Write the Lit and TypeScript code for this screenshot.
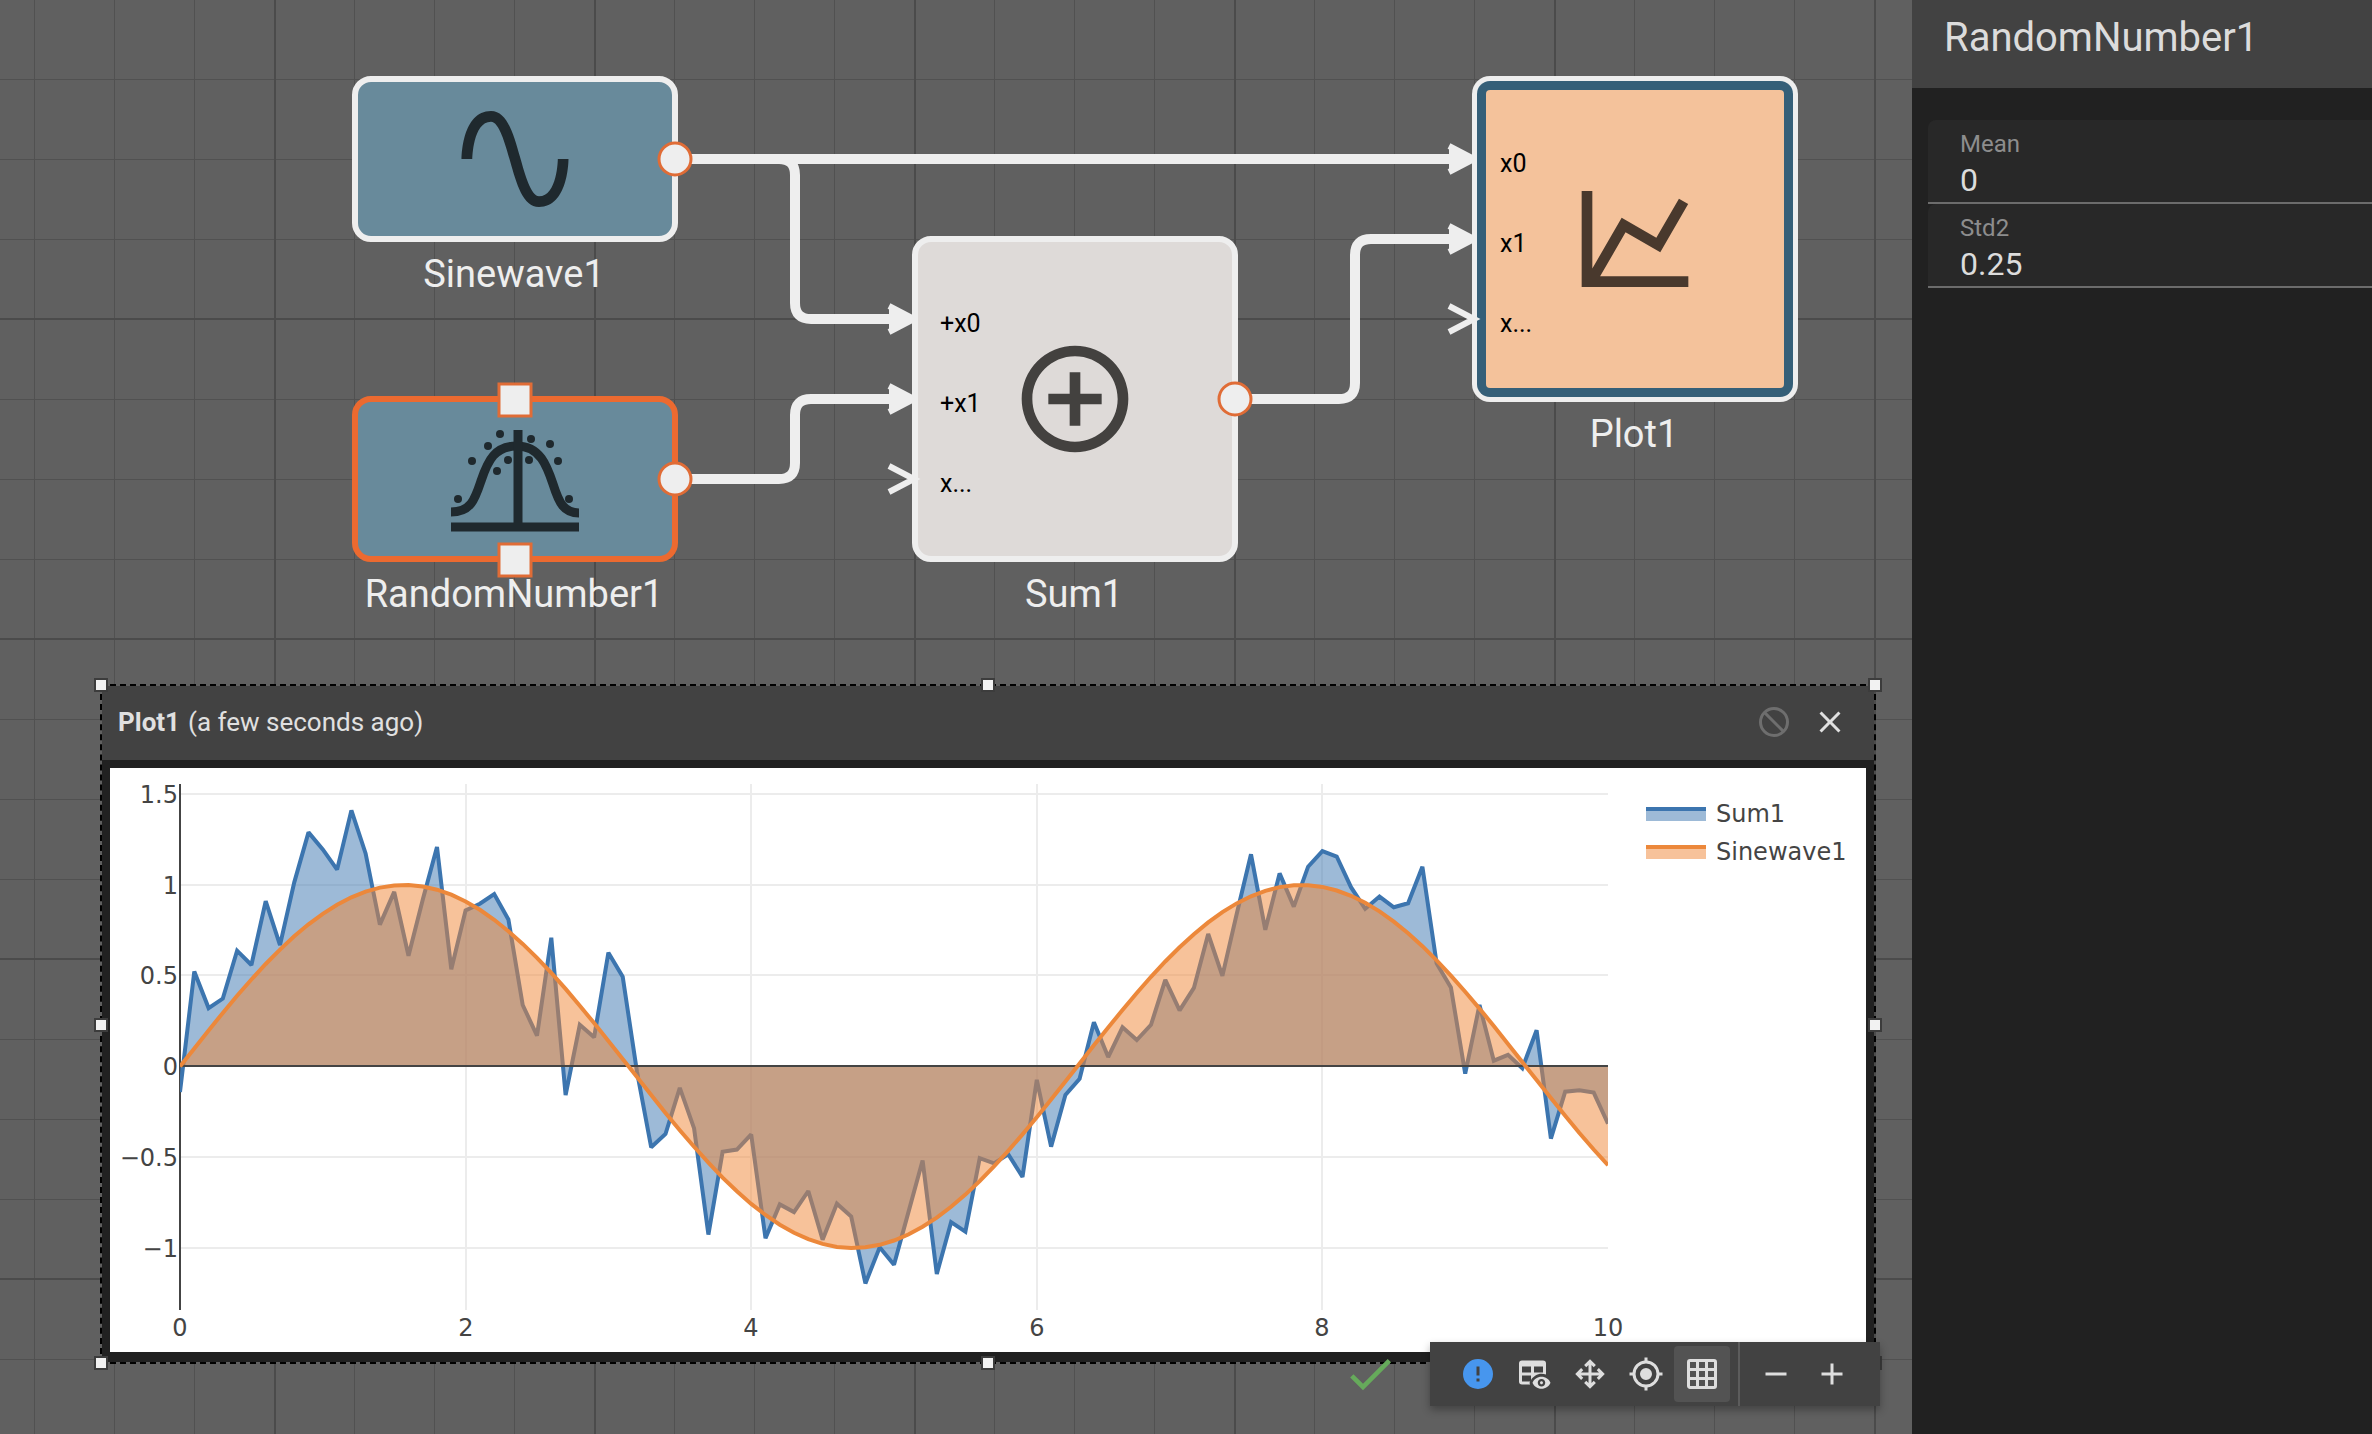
import { LitElement, html, svg, css } from "lit";
import { customElement, property } from "lit/decorators.js";

const SUM_SAMPLES = [
  -0.14, 0.523, 0.322, 0.374, 0.638, 0.559, 0.911, 0.669, 1.013, 1.29,
  1.196, 1.085, 1.411, 1.174, 0.782, 0.962, 0.61, 0.92, 1.209, 0.536,
  0.86, 0.897, 0.95, 0.81, 0.339, 0.17, 0.709, -0.157, 0.23, 0.161,
  0.627, 0.495, -0.03, -0.445, -0.372, -0.118, -0.341, -0.926, -0.47, -0.458,
  -0.374, -0.946, -0.76, -0.802, -0.686, -0.955, -0.756, -0.827, -1.195, -0.996,
  -1.092, -0.805, -0.518, -1.143, -0.858, -0.91, -0.505, -0.534, -0.484, -0.608,
  -0.074, -0.442, -0.157, -0.067, 0.244, 0.052, 0.216, 0.146, 0.23, 0.477,
  0.309, 0.433, 0.73, 0.499, 0.84, 1.169, 0.753, 1.064, 0.881, 1.101,
  1.186, 1.157, 0.988, 0.869, 0.936, 0.877, 0.899, 1.1, 0.568, 0.436,
  -0.039, 0.339, 0.032, 0.064, -0.01, 0.2, -0.397, -0.139, -0.131, -0.144,
  -0.315,
];
const SINE_SAMPLES = SUM_SAMPLES.map((_, i) => Math.sin(i / 10));

const ICONS = {
  sine: "M16.5,21C13.5,21 12.31,16.76 11.05,12.28C10.14,9.04 9,5 7.5,5C4.11,5 4,11.93 4,12H2C2,11.63 2.06,3 7.5,3C10.5,3 11.71,7.25 12.97,11.74C13.83,14.8 15,19 16.5,19C19.94,19 20.03,12.07 20.03,12H22.03C22.03,12.37 21.97,21 16.5,21Z",
  sum: "M12,20C7.59,20 4,16.41 4,12C4,7.59 7.59,4 12,4C16.41,4 20,7.59 20,12C20,16.41 16.41,20 12,20M12,2A10,10 0 0,0 2,12A10,10 0 0,0 12,22A10,10 0 0,0 22,12A10,10 0 0,0 12,2M13,7H11V11H7V13H11V17H13V13H17V11H13V7Z",
  chart: "M16,11.78L20.24,4.45L21.97,5.45L16.74,14.5L10.23,10.75L5.46,19H22V21H2V3H4V17.54L9.5,8L16,11.78Z",
  alert: "M13,13H11V7H13M13,17H11V15H13M12,2A10,10 0 0,0 2,12A10,10 0 0,0 12,22A10,10 0 0,0 22,12A10,10 0 0,0 12,2Z",
  tableEye: "M17 16.88C17.56 16.88 18 17.32 18 17.88S17.56 18.88 17 18.88 16 18.43 16 17.88 16.44 16.88 17 16.88M17 13.88C19.73 13.88 22.06 15.54 23 17.88C22.06 20.22 19.73 21.88 17 21.88S11.94 20.22 11 17.88C11.94 15.54 14.27 13.88 17 13.88M17 15.38C15.62 15.38 14.5 16.5 14.5 17.88S15.62 20.38 17 20.38 19.5 19.26 19.5 17.88 18.38 15.38 17 15.38M18 3H4A2 2 0 0 0 2 5V17A2 2 0 0 0 4 19H9.42C9.26 18.68 9.12 18.34 9 18C9.12 17.66 9.26 17.32 9.42 17H4V13H10V15.92C10.77 14.74 11.8 13.72 13 13C14.2 12.28 15.5 11.88 17 11.88C18.06 11.88 19.07 12.06 20 12.4V5A2 2 0 0 0 18 3M4 11V7H10V11H4M12 11V7H18V11H12Z",
  move: "M13,11H18L16.5,9.5L17.92,8.08L21.84,12L17.92,15.92L16.5,14.5L18,13H13V18L14.5,16.5L15.92,17.92L12,21.84L8.08,17.92L9.5,16.5L11,18V13H6L7.5,14.5L6.08,15.92L2.16,12L6.08,8.08L7.5,9.5L6,11H11V6L9.5,7.5L8.08,6.08L12,2.16L15.92,6.08L14.5,7.5L13,6V11Z",
  center: "M12,8A4,4 0 0,1 16,12A4,4 0 0,1 12,16A4,4 0 0,1 8,12A4,4 0 0,1 12,8M3.05,13H1V11H3.05C3.5,6.83 6.83,3.5 11,3.05V1H13V3.05C17.17,3.5 20.5,6.83 20.95,11H23V13H20.95C20.5,17.17 17.17,20.5 13,20.95V23H11V20.95C6.83,20.5 3.5,17.17 3.05,13M12,5A7,7 0 0,0 5,12A7,7 0 0,0 12,19A7,7 0 0,0 19,12A7,7 0 0,0 12,5Z",
  grid: "M10,4V8H14V4H10M16,4V8H20V4H16M16,10V14H20V10H16M16,16V20H20V16H16M14,20V16H10V20H14M8,20V16H4V20H8M8,14V10H4V14H8M8,8V4H4V8H8M10,14H14V10H10V14M4,2H20A2,2 0 0,1 22,4V20A2,2 0 0,1 20,22H4C2.92,22 2,21.1 2,20V4A2,2 0 0,1 4,2Z",
  minus: "M19,13H5V11H19V13Z",
  plus: "M19,13H13V19H11V13H5V11H11V5H13V11H19V13Z",
  check: "M21,7L9,19L3.5,13.5L4.91,12.09L9,16.17L19.59,5.59L21,7Z",
  close: "M19,6.41L17.59,5L12,10.59L6.41,5L5,6.41L10.59,12L5,17.59L6.41,19L12,13.41L17.59,19L19,17.59L13.41,12L19,6.41Z",
};

const icon = (path: string) => html`
  <svg class="icon" viewBox="0 0 24 24" aria-hidden="true">
    <path fill="currentColor" fill-rule="evenodd" d=${path}></path>
  </svg>
`;

@customElement("block-diagram")
class BlockDiagram extends LitElement {
  static styles = css`
    :host {
      display: block;
      font-family: Roboto, "Liberation Sans", sans-serif;
    }
    .scene {
      display: block;
      width: 100%;
      height: 100%;
    }
    .wire {
      fill: none;
      stroke: #eeeeee;
      stroke-width: 10;
    }
    .arrow {
      fill: #eeeeee;
      stroke: #eeeeee;
      stroke-width: 6;
    }
    .arrow.open {
      fill: none;
    }
    .block {
      stroke: #eeeeee;
      stroke-width: 6;
    }
    .block.source {
      fill: #688a9b;
    }
    .block.math {
      fill: #dedad8;
    }
    .block.selected {
      stroke: #ec6a30;
    }
    .sink-edge {
      fill: #eeeeee;
    }
    .sink-frame {
      fill: #355f78;
    }
    .sink-face {
      fill: #f4c29b;
    }
    .port,
    .handle {
      fill: #eeeeee;
      stroke: #e06c36;
      stroke-width: 3;
    }
    .name {
      font-size: 38px;
      fill: #eeeeee;
      text-anchor: middle;
    }
    .port-name {
      font-size: 25px;
      fill: #000000;
    }
    .ink-cool {
      fill: #1f292e;
    }
    .ink-neutral {
      fill: #43413f;
    }
    .ink-warm {
      fill: #49392d;
    }
    .bell {
      fill: none;
      stroke: #1f292e;
      stroke-width: 9;
    }
  `;

  private glyph(path: string, x: number, y: number, ink: string) {
    return svg`<svg x=${x} y=${y} width="128" height="128" viewBox="0 0 24 24">
      <path class=${ink} d=${path}></path>
    </svg>`;
  }

  private arrow(x: number, y: number, open = false) {
    return svg`<path class=${open ? "arrow open" : "arrow"} d="M${x - 25} ${y - 13}L${x} ${y}L${x - 25} ${y + 13}"></path>`;
  }

  private portNames(x: number, y: number, names: string[]) {
    return names.map((n, i) => svg`<text class="port-name" x=${x} y=${y + i * 80}>${n}</text>`);
  }

  render() {
    const dots = [
      [500, 434], [488, 446], [472, 461], [508, 460], [497, 471], [531, 439],
      [550, 444], [529, 460], [558, 461], [458, 499], [569, 499],
    ];
    return html`
      <svg class="scene" role="img" aria-label="Block diagram">
        <path class="wire" d="M675 159H1465"></path>
        <path class="wire" d="M675 159H779Q795 159 795 175V303Q795 319 811 319H905"></path>
        <path class="wire" d="M675 479H779Q795 479 795 463V415Q795 399 811 399H905"></path>
        <path class="wire" d="M1235 399H1339Q1355 399 1355 383V255Q1355 239 1371 239H1465"></path>
        ${this.arrow(914, 319)} ${this.arrow(914, 399)}
        ${this.arrow(1474, 159)} ${this.arrow(1474, 239)}

        <rect class="block source" x="355" y="79" width="320" height="160" rx="16"></rect>
        ${this.glyph(ICONS.sine, 451, 95, "ink-cool")}
        <circle class="port" cx="675" cy="159" r="16"></circle>
        <text class="name" x="514" y="287">Sinewave1</text>

        <rect class="block source selected" x="355" y="399" width="320" height="160" rx="16"></rect>
        <path class="bell" d="M451 512C471 512 475 499 481 481C488 460 495 446 517 446C540 446 547 466 553 484C559 503 564 513 579 513"></path>
        <path class="bell" d="M451 527H579M518 430V527"></path>
        ${dots.map(([x, y]) => svg`<circle class="ink-cool" cx=${x} cy=${y} r="4"></circle>`)}
        <circle class="port" cx="675" cy="479" r="16"></circle>
        <text class="name" x="514" y="607">RandomNumber1</text>
        <rect class="handle" x="499" y="384" width="32" height="32"></rect>
        <rect class="handle" x="499" y="544" width="32" height="32"></rect>

        <rect class="block math" x="915" y="239" width="320" height="320" rx="16"></rect>
        ${this.glyph(ICONS.sum, 1011, 335, "ink-neutral")}
        ${this.portNames(940, 332, ["+x0", "+x1", "x..."])}
        ${this.arrow(914, 479, true)}
        <circle class="port" cx="1235" cy="399" r="16"></circle>
        <text class="name" x="1074" y="607">Sum1</text>

        <rect class="sink-edge" x="1472" y="76" width="326" height="326" rx="18"></rect>
        <rect class="sink-frame" x="1477" y="81" width="316" height="316" rx="13"></rect>
        <rect class="sink-face" x="1486" y="90" width="298" height="298" rx="4"></rect>
        ${this.glyph(ICONS.chart, 1571, 175, "ink-warm")}
        ${this.portNames(1500, 172, ["x0", "x1", "x..."])}
        ${this.arrow(1474, 319, true)}
        <text class="name" x="1634" y="447">Plot1</text>
      </svg>
    `;
  }
}

@customElement("signal-chart")
class SignalChart extends LitElement {
  static styles = css`
    :host {
      display: block;
      background: #ffffff;
    }
    svg {
      display: block;
      width: 100%;
      height: 100%;
    }
    .rule {
      stroke: #ececec;
      stroke-width: 2;
    }
    .axis {
      stroke: #444444;
      stroke-width: 2;
    }
    .label {
      font-family: "DejaVu Sans", sans-serif;
      font-size: 24px;
      fill: #444444;
    }
    .end {
      text-anchor: end;
    }
    .mid {
      text-anchor: middle;
    }
    .area-sum {
      fill: #3c75af;
      fill-opacity: 0.5;
    }
    .area-sine {
      fill: #ef8636;
      fill-opacity: 0.5;
    }
    .line {
      fill: none;
      stroke-width: 4;
      stroke-miterlimit: 2;
    }
    .line.sum {
      stroke: #3c75af;
    }
    .line.sine {
      stroke: #ec883b;
    }
  `;

  private px = (v: number) => 70 + 142.8 * v;
  private py = (v: number) => 298.5 - 181.5 * v;

  private points(samples: number[]) {
    return samples
      .map((v, i) => `${this.px(i / 10).toFixed(1)},${this.py(v).toFixed(1)}`)
      .join(" ");
  }

  render() {
    const sum = this.points(SUM_SAMPLES);
    const sine = this.points(SINE_SAMPLES);
    const base = Math.floor(this.py(0));
    const close = `1498,${base} 70,${base}`;
    const yTicks = [1.5, 1, 0.5, 0, -0.5, -1];
    const xTicks = [0, 2, 4, 6, 8, 10];
    return html`
      <svg viewBox="0 0 1756 584" role="img" aria-label="Sum1 and Sinewave1 over time">
        <clipPath id="plot-area"><rect x="70" y="16" width="1428" height="526"></rect></clipPath>
        ${yTicks.map((t) => {
          const y = Math.floor(this.py(t));
          return svg`
            ${t === 0 ? "" : svg`<line class="rule" x1="70" x2="1498" y1=${y} y2=${y}></line>`}
            <text class="label end" x="68" y=${y + 9}>${String(t).replace("-", "\u2212")}</text>`;
        })}
        ${xTicks.map((t) => {
          const x = Math.round(this.px(t));
          return svg`
            ${t === 0 || t === 10 ? "" : svg`<line class="rule" x1=${x} x2=${x} y1="16" y2="542"></line>`}
            <text class="label mid" x=${x} y="568">${t}</text>`;
        })}
        <line class="axis" x1="70" x2="70" y1="16" y2="542"></line>
        <g clip-path="url(#plot-area)">
          <polygon class="area-sum" points="${sum} ${close}"></polygon>
          <polyline class="line sum" points=${sum}></polyline>
          <polygon class="area-sine" points="${sine} ${close}"></polygon>
          <line class="axis" x1="70" x2="1498" y1=${base} y2=${base}></line>
          <polyline class="line sine" points=${sine}></polyline>
        </g>
        <rect class="area-sum" x="1536" y="41" width="60" height="12"></rect>
        <line class="line sum" x1="1536" x2="1596" y1="41" y2="41"></line>
        <text class="label" x="1606" y="54">Sum1</text>
        <rect class="area-sine" x="1536" y="79" width="60" height="12"></rect>
        <line class="line sine" x1="1536" x2="1596" y1="79" y2="79"></line>
        <text class="label" x="1606" y="92">Sinewave1</text>
      </svg>
    `;
  }
}

@customElement("plot-window")
class PlotWindow extends LitElement {
  static styles = css`
    :host {
      box-sizing: border-box;
      display: flex;
      flex-direction: column;
      border: 2px dashed #000000;
      background: #212121;
      background-clip: padding-box;
      font-family: Roboto, "Liberation Sans", sans-serif;
      color: #e0e0e0;
    }
    .head {
      display: flex;
      align-items: center;
      gap: 8px;
      height: 74px;
      padding: 0 20px 2px 16px;
      box-sizing: border-box;
      background: #424242;
      font-size: 26px;
      line-height: 32px;
    }
    .title {
      margin: 0;
      font-size: 26px;
      font-weight: 700;
    }
    .age {
      flex: 1;
    }
    .tool {
      display: flex;
      align-items: center;
      justify-content: center;
      width: 48px;
      height: 48px;
      padding: 0;
      border: 0;
      background: none;
      color: inherit;
    }
    .tool:disabled {
      color: #6e6e6e;
    }
    .icon {
      display: block;
      width: 36px;
      height: 36px;
    }
    .blocked {
      fill: none;
      stroke: currentColor;
      stroke-width: 2;
    }
    .body {
      flex: 1;
      display: flex;
      padding: 8px 8px 10px;
    }
    signal-chart {
      flex: 1;
    }
    .grip {
      position: absolute;
      box-sizing: border-box;
      width: 14px;
      height: 14px;
      border: 2px solid #3c3c3c;
      background: #f2f2f2;
    }
    .n {
      top: -8px;
    }
    .s {
      bottom: -8px;
    }
    .w {
      left: -8px;
    }
    .e {
      right: -8px;
    }
    .cx {
      left: calc(50% - 7px);
    }
    .cy {
      top: calc(50% - 6px);
    }
  `;

  render() {
    return html`
      <header class="head">
        <h2 class="title">Plot1</h2>
        <span class="age">(a few seconds ago)</span>
        <button class="tool" type="button" aria-label="Stop updating" disabled>
          <svg class="icon" viewBox="0 0 24 24" aria-hidden="true">
            <circle class="blocked" cx="12" cy="12" r="9"></circle>
            <path class="blocked" d="M5.6 5.6L18.4 18.4"></path>
          </svg>
        </button>
        <button class="tool" type="button" aria-label="Close">${icon(ICONS.close)}</button>
      </header>
      <div class="body"><signal-chart></signal-chart></div>
      ${["n w", "n cx", "n e", "cy w", "cy e", "s w", "s cx", "s e"].map(
        (c) => html`<span class="grip ${c}"></span>`,
      )}
    `;
  }
}

@customElement("canvas-toolbar")
class CanvasToolbar extends LitElement {
  static styles = css`
    :host {
      display: flex;
      align-items: center;
      gap: 32px;
    }
    .status {
      width: 56px;
      height: 56px;
      color: #66aa5b;
    }
    .status .icon {
      width: 56px;
      height: 56px;
    }
    .bar {
      display: flex;
      align-items: center;
      height: 64px;
      padding: 0 20px;
      background: #424242;
      box-shadow: 0 4px 8px rgba(0, 0, 0, 0.3);
    }
    .tool {
      display: flex;
      align-items: center;
      justify-content: center;
      width: 56px;
      height: 56px;
      padding: 0;
      border: 0;
      border-radius: 4px;
      background: none;
      color: #dedede;
    }
    .tool.info {
      color: #4796ee;
    }
    .tool.on {
      background: #535353;
    }
    .rule {
      width: 2px;
      height: 64px;
      margin: 0 8px;
      background: #5c5c5c;
    }
    .icon {
      display: block;
      width: 36px;
      height: 36px;
    }
  `;

  render() {
    return html`
      <div class="status" role="img" aria-label="Up to date">${icon(ICONS.check)}</div>
      <div class="bar" role="toolbar" aria-label="Canvas">
        <button class="tool info" type="button" aria-label="Messages">${icon(ICONS.alert)}</button>
        <button class="tool" type="button" aria-label="Show tables">${icon(ICONS.tableEye)}</button>
        <button class="tool" type="button" aria-label="Fit to view">${icon(ICONS.move)}</button>
        <button class="tool" type="button" aria-label="Center">${icon(ICONS.center)}</button>
        <button class="tool on" type="button" aria-label="Grid" aria-pressed="true">${icon(ICONS.grid)}</button>
        <span class="rule"></span>
        <button class="tool" type="button" aria-label="Zoom out">${icon(ICONS.minus)}</button>
        <button class="tool" type="button" aria-label="Zoom in">${icon(ICONS.plus)}</button>
      </div>
    `;
  }
}

@customElement("property-panel")
class PropertyPanel extends LitElement {
  static styles = css`
    :host {
      display: block;
      position: relative;
      background: #212121;
      font-family: Roboto, "Liberation Sans", sans-serif;
      color: #dcdcdc;
    }
    .head {
      box-sizing: border-box;
      height: 88px;
      padding: 14px 32px 0;
      background: #424242;
    }
    .title {
      margin: 0;
      font-size: 40px;
      line-height: 48px;
      font-weight: 400;
    }
    .fields {
      display: flex;
      flex-direction: column;
      padding: 32px 0 0 16px;
    }
    .field {
      display: flex;
      flex-direction: column;
      gap: 4px;
      padding: 10px 0 4px 32px;
      border-bottom: 2px solid #6c6c6c;
      border-radius: 8px 0 0 0;
      background: #282828;
    }
    .label {
      font-size: 24px;
      line-height: 28px;
      color: #8d8d8d;
    }
    .value {
      height: 36px;
      padding: 0;
      border: 0;
      outline: 0;
      background: none;
      font: 400 32px/36px Roboto, "Liberation Sans", sans-serif;
      color: inherit;
    }
  `;

  @property() heading = "";

  render() {
    return html`
      <header class="head"><h1 class="title">${this.heading}</h1></header>
      <div class="fields">
        <div class="field">
          <label class="label" for="mean">Mean</label>
          <input class="value" id="mean" type="text" .value=${"0"} />
        </div>
        <div class="field">
          <label class="label" for="std2">Std2</label>
          <input class="value" id="std2" type="text" .value=${"0.25"} />
        </div>
      </div>
    `;
  }
}

@customElement("app-root")
class AppRoot extends LitElement {
  static styles = css`
    :host {
      display: grid;
      grid-template-columns: minmax(0, 1fr) 460px;
      height: 100vh;
      overflow: hidden;
    }
    .canvas {
      position: relative;
      overflow: hidden;
      background-color: #606060;
      background-image: linear-gradient(90deg, #4b4b4b 2px, transparent 2px),
        linear-gradient(#4b4b4b 2px, transparent 2px),
        linear-gradient(90deg, #515151 1px, transparent 1px),
        linear-gradient(#515151 1px, transparent 1px);
      background-size: 320px 320px, 320px 320px, 80px 80px, 80px 80px;
      background-position: 274px -2px, 274px -2px, 274px -1px, 274px -1px;
    }
    block-diagram {
      height: 100%;
    }
    plot-window {
      position: absolute;
      left: 100px;
      top: 684px;
      width: 1776px;
      height: 680px;
    }
    canvas-toolbar {
      position: absolute;
      right: 32px;
      bottom: 28px;
    }
  `;

  render() {
    return html`
      <main class="canvas">
        <block-diagram></block-diagram>
        <plot-window></plot-window>
        <canvas-toolbar></canvas-toolbar>
      </main>
      <property-panel heading="RandomNumber1"></property-panel>
    `;
  }
}
